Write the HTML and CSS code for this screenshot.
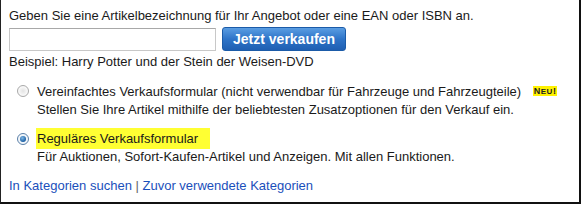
FILE: index.html
```html
<!DOCTYPE html>
<html lang="de">
<head>
    <meta charset="UTF-8">
    <title>Verkaufen</title>
    <link rel="stylesheet" href="styles.css">
</head>
<body>
    <div class="box">
        <p class="intro">Geben Sie eine Artikelbezeichnung für Ihr Angebot oder eine EAN oder ISBN an.</p>
        <div class="search-row">
            <input type="text" class="search-input">
            <button class="sell-btn">Jetzt verkaufen</button>
        </div>
        <p class="example">Beispiel: Harry Potter und der Stein der Weisen-DVD</p>

        <div class="option first">
            <span class="radio"></span>
            <div class="option-text">
                <div class="option-title">Vereinfachtes Verkaufsformular (nicht verwendbar für Fahrzeuge und Fahrzeugteile) <span class="new-badge">N<small>EU</small>!</span></div>
                <div class="option-desc">Stellen Sie Ihre Artikel mithilfe der beliebtesten Zusatzoptionen für den Verkauf ein.</div>
            </div>
        </div>

        <div class="option second">
            <span class="radio checked"></span>
            <div class="option-text">
                <div class="option-title"><span class="marker">Reguläres Verkaufsformular</span></div>
                <div class="option-desc">Für Auktionen, Sofort-Kaufen-Artikel und Anzeigen. Mit allen Funktionen.</div>
            </div>
        </div>

        <div class="links">
            <a href="#">In Kategorien suchen</a> <span class="sep">|</span> <a href="#">Zuvor verwendete Kategorien</a>
        </div>
    </div>
</body>
</html>
```

FILE: styles.css
```css
* {
    margin: 0;
    padding: 0;
    box-sizing: border-box;
    font-family: 'Liberation Sans', Arial, sans-serif;
}

body {
    background: #fff;
}

.box {
    width: 581px;
    height: 204px;
    border-left: 1px solid #222;
    border-right: 2px solid #111;
    border-bottom: 2px solid #111;
    padding: 8px 0 0 8px;
    font-size: 13px;
    color: #1a1a1a;
}

.intro {
    line-height: 15px;
}

.search-row {
    display: flex;
    align-items: center;
    margin-top: 4px;
    height: 24px;
}

.search-input {
    width: 207px;
    height: 23px;
    border: 1px solid #c8c8c8;
    border-top-color: #a8a8a8;
    background: #fff;
}

.sell-btn {
    margin-left: 6px;
    width: 124px;
    height: 24px;
    border: 1px solid #1b5ba8;
    border-radius: 3px;
    background: linear-gradient(#5a9de2, #2e74c8 50%, #1f5fb2);
    color: #fff;
    font-weight: bold;
    font-size: 14px;
    cursor: pointer;
}

.example {
    margin-top: 3px;
    line-height: 15px;
}

.option {
    display: flex;
    align-items: flex-start;
    padding-left: 8px;
}

.option.first {
    margin-top: 14px;
}

.option.second {
    margin-top: 14px;
}

.radio {
    width: 12px;
    height: 12px;
    border-radius: 50%;
    border: 1px solid #a9a9a9;
    background: radial-gradient(circle at 50% 50%, #e3e3e3, #f8f8f8 60%);
    margin-top: 2px;
    margin-right: 8px;
    flex-shrink: 0;
    position: relative;
}

.radio.checked {
    border-color: #5a7fa8;
    background: radial-gradient(circle at 50% 50%, #dfeaf4, #f6f9fc 70%);
}

.radio.checked::after {
    content: "";
    position: absolute;
    left: 2px;
    top: 2px;
    width: 6px;
    height: 6px;
    border-radius: 50%;
    background: radial-gradient(circle at 40% 35%, #7fb8e6, #1b5fa3 70%, #0e3f78);
}

.option-title {
    line-height: 16px;
}

.option-desc {
    margin-top: 2px;
    line-height: 15px;
}

.new-badge {
    margin-left: 8px;
    padding: 0 1px;
    background: #fff200;
    color: #222;
    font-size: 9px;
    font-weight: bold;
    letter-spacing: 0.5px;
    vertical-align: 2px;
}

.new-badge small {
    font-size: 8px;
}

.marker {
    background: #ffff33;
    padding: 3px 12px 3px 1px;
    margin-left: -1px;
}

.links {
    margin-top: 14px;
    line-height: 15px;
    color: #555;
}

.links a {
    color: #1a4fbb;
    text-decoration: none;
}

.sep {
    color: #666;
}
```
